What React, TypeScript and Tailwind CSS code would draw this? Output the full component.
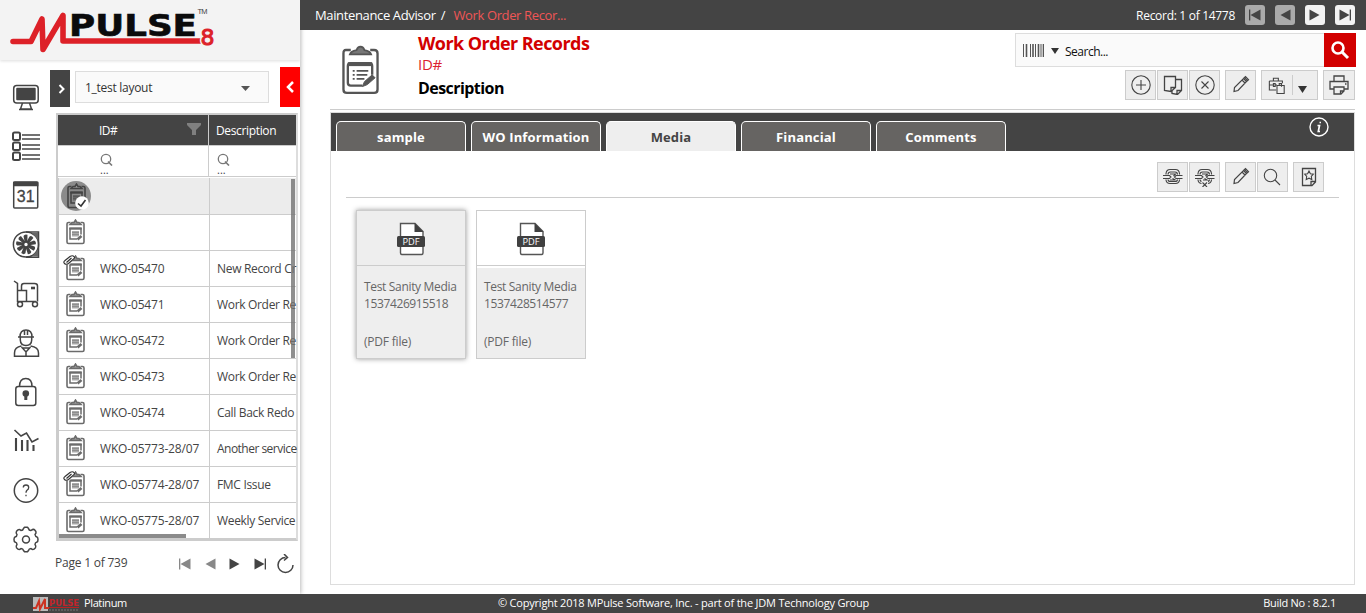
import React from "react";

type IconProps = { className?: string };

const Clipboard = ({ className = "w-[37px] h-[50px]" }: IconProps) => (
  <svg viewBox="0 0 38 50" className={className} fill="none" stroke="#555" strokeWidth="2.4">
    <path d="M9 4.500H4Q1.500 4.500 1.500 8V45Q1.500 48.500 5 48.500H33Q36.500 48.500 36.500 45V8Q36.500 4.500 33 4.500H29" />
    <path d="M8 9Q9 5.500 15 4.500Q16 1 19 1T23 4.500Q29 5.500 30 9Z" fill="#777" strokeWidth="1.800" />
    <path d="M31 30V21Q31 18 28 18H9Q6 18 6 21V38Q6 41 9 41H21" />
    <path d="M6 19H31" strokeWidth="4" />
    <path d="M11 26H13M15 26H27M11 30H13M15 30H26M11 34H13M15 34H23" strokeWidth="1.800" />
    <path d="M21 42L23 37L31 30L34 33L26 40Z" fill="#555" strokeWidth="1" />
  </svg>
);

const RowClipboard = ({ dark }: { dark?: boolean }) => (
  <svg viewBox="0 0 19 26" className="h-[26px] w-[19px]" fill="none" stroke={dark ? "#444" : "#6b6b6b"}>
    <path d="M4.500 3.500H2.500Q1 3.500 1 5V23Q1 24.500 2.500 24.500H16.500Q18 24.500 18 23V5Q18 3.500 16.500 3.500H14.500" strokeWidth="1.600" />
    <path d="M4 5.500L6 3.500H8L9.500 1L11 3.500H13L15 5.500Z" fill="#999" strokeWidth="1.500" />
    <path d="M15 15.500V9.500H4V20H11" strokeWidth="1.500" />
    <path d="M3.300 9.500H15.700" strokeWidth="2.200" />
    <rect x="6" y="12" width="7" height="5.500" fill={dark ? "#666" : "#aaa"} stroke="none" />
    <path d="M6 13.500H13M6 15.500H13" stroke={dark ? "#555" : "#888"} strokeWidth="0.800" />
    <path d="M11.500 20.500L15.500 17" strokeWidth="2.600" />
  </svg>
);

const Clip = () => (
  <svg viewBox="0 0 12 10" className="absolute left-[4px] top-[4px] h-[10px] w-[12px]" fill="none" stroke="#333" strokeWidth="1.200">
    <path d="M1 9.500L0 10V4L6 0H12V3L6 10Z" fill="#fff" stroke="none" />
    <path d="M3.500 7.500L8.500 3M2 5.500L7 1.500Q9.500 0 11 1.500T10 4.500L5.500 8.500Q3 10 1.500 8.500T2 5.500" />
  </svg>
);

const navIcons: React.ReactNode[] = [
  <>
    <rect x="1.700" y="2.500" width="24.500" height="17.500" rx="3" />
    <rect x="4.200" y="4.800" width="19.500" height="12.500" rx="1" fill="#444" stroke="none" />
    <path d="M10.500 20L8.500 26H19.500L17.500 20M7 26.500H21" />
  </>,
  <>
    <path d="M10 3H28M10 7H28M10 13H28M10 17H28M10 23H28M10 27H28" />
    <rect x="1" y="0.500" width="7" height="7.500" rx="1.500" strokeWidth="2" />
    <rect x="1" y="10.500" width="7" height="7.500" rx="1.500" strokeWidth="2" />
    <rect x="1" y="20.500" width="7" height="7.500" rx="1.500" strokeWidth="2" />
  </>,
  <>
    <rect x="1.700" y="1" width="24" height="26" rx="1" />
    <path d="M1 3H26.400" strokeWidth="4.500" />
    <text x="13.700" y="20.800" textAnchor="middle" fontSize="16" fontFamily="Liberation Sans, sans-serif" fill="#444" stroke="#444" strokeWidth="0.300">31</text>
  </>,
  <>
    <circle cx="14" cy="13.500" r="12.600" />
    <path d="M14 1H26.500V26.300H14" />
    <path d="M20 2L26 9V2ZM26 18.500L20 25.500H26Z" fill="#666" stroke="none" />
    {[0, 40, 80, 120, 160, 200, 240, 280, 320].map((a) => (
      <path key={a} transform={`rotate(${a} 14 13.5)`} d="M12.700 11L11.500 5Q12.500 2.800 15.500 3.800L15.300 11Z" fill="#444" stroke="none" />
    ))}
    <circle cx="14" cy="13.500" r="2.700" fill="#fff" strokeWidth="2" />
  </>,
  <>
    <path d="M2 1L5.500 3.500V21.500H24M5.500 11V22" />
    <path d="M9.500 10V6Q9.500 3.500 12 3.500H22.500Q25.500 3.500 25.500 6V21.500M5.500 10.500H14.500V21.500" />
    <path d="M19 8H23" strokeWidth="2.600" />
    <circle cx="8" cy="24.200" r="2.500" fill="#fff" /><circle cx="23" cy="24.200" r="2.500" fill="#fff" />
  </>,
  <>
    <path d="M6 8H22M8 8Q8 1 14 1T20 8M12.500 1V6M15.500 1V6" />
    <path d="M8.300 8V11Q8.500 16.500 14 16.500T19.700 11V8" />
    <path d="M9.500 17Q2.500 18 2.500 24V27.300H26.500V24Q26.500 18 18.500 17M9.500 18L14 23L18.500 18M14 23V27M11 19H17" />
  </>,
  <>
    <rect x="3.800" y="8.500" width="20" height="19" rx="2.500" />
    <path d="M7.500 8.500Q7.500 0.500 13.800 0.500T20 8.500" />
    <circle cx="13.800" cy="15.500" r="3.300" fill="#444" stroke="none" />
    <path d="M13.800 15.500V22" strokeWidth="3" />
  </>,
  <>
    <path d="M2.500 3L9 9L14.500 6L20 15L26.500 11.500" strokeWidth="1.600" />
    <path d="M4 11V24M10 13V24M15.500 13V24M21.500 18V24" strokeWidth="2.100" />
  </>,
  <>
    <circle cx="14" cy="13.500" r="11.700" />
    <path d="M11.300 10.500Q11.300 8 14 8T16.700 10.500Q16.700 12.300 15 13.300Q14 14.300 14 15.800M14 17.800V19.300" strokeWidth="1.300" />
  </>,
  <>
    <path transform="translate(0 -0.5)" d="M11.500 3L12.500 1.800H15.500L16.500 3Q17 5.200 19 5Q21.500 3 22.700 4.500L23.900 6Q24.500 7.500 23 9Q23.300 11 25 11.500Q26 12 26 14T25 16.500Q23 17 23 19Q24.500 21 23.500 22.300L22 23.600Q20.500 24.500 19 23Q17 23 16.500 25L15.500 26.200H12.500L11.500 25Q11 23 9 23Q7.500 24.500 6 23.600L4.500 22.300Q3.500 21 5 19Q5 17 3 16.500Q2 16 2 14T3 11.500Q5 11 5 9Q3.500 7.500 4.500 5.800L6 4.400Q7.500 3.500 9 5Q11 5 11.500 3Z" strokeLinejoin="round" />
    <circle cx="14" cy="13.500" r="3.500" />
  </>,
];

const rows: { id: string; desc: string; clip?: boolean; sel?: boolean }[] = [
  { id: "", desc: "", sel: true },
  { id: "", desc: "" },
  { id: "WKO-05470", desc: "New Record Cr", clip: true },
  { id: "WKO-05471", desc: "Work Order Re" },
  { id: "WKO-05472", desc: "Work Order Re" },
  { id: "WKO-05473", desc: "Work Order Re" },
  { id: "WKO-05474", desc: "Call Back Redo" },
  { id: "WKO-05773-28/07", desc: "Another service" },
  { id: "WKO-05774-28/07", desc: "FMC Issue", clip: true },
  { id: "WKO-05775-28/07", desc: "Weekly Service" },
];

const Btn = ({ children, className = "w-[31px]" }: { children: React.ReactNode; className?: string }) => (
  <button className={`flex h-[30px] shrink-0 items-center justify-center border border-[#ccc] bg-[#eee] pb-px ${className}`}>{children}</button>
);

const Ic = ({ children, className = "size-[20px]" }: { children: React.ReactNode; className?: string }) => (
  <svg viewBox="0 0 20 20" className={className} fill="none" stroke="#444" strokeWidth="1.1">{children}</svg>
);

const Pencil = () => (
  <Ic><path d="M3 16.500L3.500 12.500L12.500 3.500L15.500 6.500L7 15.500ZM12.500 3.500L14.500 1.700L17.500 4.700L15.500 6.500M11 5L14 8M13.500 2.600L16.500 5.600" strokeWidth="1.200" /></Ic>
);

const chain = (
  <>
    <path d="M3 7.500V6.500Q3.500 2.500 7 2.500H12.500Q16 2.500 16.500 6.500V7.500M5 7.500Q5 5 7.500 5H12Q14.500 5 14.500 7.500" />
    <path d="M3 12.500V13Q3.500 16.500 7 16.500H12.500Q16 16.500 16.500 13V12.500M5 12.500Q5 14.500 7.500 14.500H12Q14.500 14.500 14.500 12.500" />
    <path d="M0 8.500H6.500L8 10L6.500 11.500H0M19.500 8.500H13L11.500 10L13 11.500H19.500" />
  </>
);

const Step = ({ dir, bar, color = "#444" }: { dir: "l" | "r"; bar?: boolean; color?: string }) => (
  <svg viewBox="0 0 14 14" className="size-[14px]" fill={color}>
    <g transform={dir === "r" ? "translate(14 0) scale(-1 1)" : undefined}>
      <path d="M12.500 1.500V12.500L2.500 7Z" />
      {bar && <path d="M1 1.500H2.300V12.500H1Z" />}
    </g>
  </svg>
);

const Funnel = () => (
  <svg viewBox="0 0 14 12" className="mb-[2px] h-[12px] w-[14px]" fill="#808080"><path d="M0 0H14V2L9 7V12H5V7L0 2Z" /></svg>
);

const Lens = () => (
  <svg viewBox="0 0 13 13" className="size-[13px]" fill="none" stroke="#777" strokeWidth="1.300"><circle cx="6" cy="6" r="4.700" /><path d="M8 8.500L12 12.500" strokeWidth="1.600" /></svg>
);

const Logo = () => (
  <svg viewBox="0 0 300 60" className="h-[60px] w-[300px]">
    <text x="69" y="35.500" fontSize="29.500" fontWeight="700" fontFamily="DejaVu Sans, sans-serif" textLength="128" lengthAdjust="spacingAndGlyphs" fill="#0b0b0c" stroke="#0b0b0c" strokeWidth="0.600">PULSE</text>
    <path d="M13 41.500H31L42 19L43 49.500L63 15.500V41H203" fill="none" stroke="#dd2128" strokeWidth="5.600" strokeLinejoin="round" strokeLinecap="round" />
    <text x="197.500" y="13.500" fontSize="7.500" fontFamily="Liberation Sans, sans-serif" fill="#444" textLength="10">TM</text>
    <text x="200.500" y="44.500" fontSize="22" fontFamily="DejaVu Sans, sans-serif" fill="none" stroke="#f3f3f3" strokeWidth="4" textLength="14" lengthAdjust="spacingAndGlyphs">8</text>
    <text x="200.500" y="44.500" fontSize="22" fontFamily="DejaVu Sans, sans-serif" fill="#dd2128" stroke="#dd2128" strokeWidth="1" textLength="14" lengthAdjust="spacingAndGlyphs">8</text>
  </svg>
);

const PdfIcon = () => (
  <svg viewBox="0 0 30 34" className="h-[34px] w-[30px]">
    <path d="M4.500 1.500H19L27 9.500V31Q27 32.500 25.500 32.500H6Q4.500 32.500 4.500 31Z" fill="#fff" stroke="#555" strokeWidth="1.400" />
    <path d="M18.500 1V10H27.500Z" fill="#404040" />
    <rect x="1" y="14" width="28" height="11" rx="1.500" fill="#404040" />
    <text x="15" y="22.800" textAnchor="middle" fontSize="9.300" fontFamily="Open Sans, sans-serif" fill="#fff">PDF</text>
  </svg>
);

const Card = ({ num, active }: { num: string; active?: boolean }) => (
  <div className={`flex h-[149px] w-[110px] flex-col border border-[#ccc] text-[12px] leading-[17px] text-[#666] ${active ? "bg-[#eee] shadow-[0_0_5px_#999]" : "bg-white"}`}>
    <div className="flex h-[55px] shrink-0 items-center justify-center border-b border-[#ccc] pt-[2px] pr-[1px]"><PdfIcon /></div>
    <div className="mt-[2px] flex-1 bg-[#eee] pt-[10px] pl-[7px]">
      <div className="whitespace-nowrap tracking-[-0.330px]">Test Sanity Media</div>
      <div className="tracking-[-0.380px]">{num}</div>
      <div className="mt-[21px] tracking-[-0.200px]">(PDF file)</div>
    </div>
  </div>
);

const tabs = ["sample", "WO Information", "Media", "Financial", "Comments"];

export default function App() {
  return (
    <div className="flex h-[613px] w-[1366px] flex-col overflow-hidden bg-white font-['Open_Sans','Noto_Sans',sans-serif] text-[12px] text-[#444]">
      <div className="flex h-[594px]">
        <aside className="flex w-[300px] shrink-0 flex-col shadow-[1px_0_4px_#bbb]">
          <div className="h-[60px] shrink-0 bg-[#f3f3f3] shadow-[0_1px_3px_#ddd]"><Logo /></div>
          <div className="flex flex-1">
            <nav className="flex w-[50px] flex-col gap-[21.200px] pt-[23px] pl-[12px]">
              {navIcons.map((icon, i) => (
                <svg key={i} viewBox="0 0 28 28" className="size-[28px] shrink-0 overflow-visible" fill="none" stroke="#444" strokeWidth="1.500">{icon}</svg>
              ))}
            </nav>
            <div className="flex w-[250px] flex-col">
              <div className="flex h-[53px] pt-[7px]">
                <button className="mt-[3px] flex h-[37px] w-[20px] items-center justify-center bg-[#444]">
                  <svg viewBox="0 0 8 10" className="ml-[4px] h-[10px] w-[8px]" fill="none" stroke="#fff" strokeWidth="2"><path d="M1.500 1L5.500 5L1.500 9" /></svg>
                </button>
                <div className="mt-[4px] ml-[5px] flex h-[32px] w-[194px] items-center justify-between border border-[#ddd] bg-[#fafafa] pr-[18px] pl-[9px] text-[#333]">
                  <span className="pt-[2px] tracking-[-0.280px]">1_test layout</span>
                  <svg viewBox="0 0 9 5" className="mt-[2px] h-[5px] w-[9px]" fill="#555"><path d="M0 0H9L4.500 5Z" /></svg>
                </div>
                <button className="ml-[11px] flex h-[40px] w-[20px] items-center justify-center bg-[#f00]">
                  <svg viewBox="0 0 8 12" className="h-[12px] w-[8px]" fill="none" stroke="#fff" strokeWidth="2.500"><path d="M7 1L2 6L7 11" /></svg>
                </button>
              </div>
              <div className="ml-[6px] flex h-[428px] w-[242px] shrink-0 flex-col border-2 border-[#ccc] border-r-[#ddd]">
                <div className="flex h-[31px] shrink-0 border-b border-[#ccc] bg-[#444] text-white">
                  <div className="flex w-[151px] items-center justify-between border-r border-[#ccc] pr-[7px] pl-[41px]"><span className="pt-[2px] tracking-[-0.500px]">ID#</span><Funnel /></div>
                  <div className="flex items-center pt-[2px] pl-[7px] tracking-[-0.350px]">Description</div>
                </div>
                <div className="flex h-[31px] shrink-0 border-b border-[#ccc] text-[11px]">
                  <div className="flex w-[151px] flex-col border-r border-[#ccc] pt-[7px] pl-[42px]"><Lens /><span className="-mt-[2px] leading-[12px]">...</span></div>
                  <div className="flex flex-col pt-[7px] pl-[8px]"><Lens /><span className="-mt-[2px] leading-[12px]">...</span></div>
                </div>
                <div className="relative mt-px h-[361px] border-l border-[#ccc]">
                  {rows.map((r, i) => (
                    <div key={i} className={`flex border-b border-[#ccc] ${i === 0 ? "h-[37px]" : "h-[36px]"} ${r.sel ? "bg-[#ececec]" : ""}`}>
                      <div className="relative flex w-[41px] shrink-0 items-start pt-[4px] pl-[7px]">
                        {r.sel ? (
                          <div className="-mt-[1px] -ml-[5px] flex size-[30px] items-center justify-center rounded-full bg-[#8b8b8b]">
                            <RowClipboard dark />
                            <svg viewBox="0 0 14 14" className="absolute top-[18px] left-[16px] size-[14px]"><circle cx="7" cy="7" r="6.800" fill="#fff" /><path d="M3 7.500L6 10L10.500 4" fill="none" stroke="#333" strokeWidth="1.600" /></svg>
                          </div>
                        ) : <RowClipboard />}
                        {r.clip && <Clip />}
                      </div>
                      <div className="flex w-[110px] shrink-0 items-center border-r border-[#ccc] tracking-[-0.170px] whitespace-nowrap">{r.id}</div>
                      <div className={`flex w-[86px] shrink-0 items-center pl-[7px] whitespace-nowrap ${r.desc === "Another service" ? "tracking-[-0.520px]" : "tracking-[-0.320px]"}`}>{r.desc}</div>
                    </div>
                  ))}
                  <div className="absolute top-[1px] right-[1px] h-[179px] w-[4px] bg-[#737373]/80" />
                  <div className="absolute bottom-px left-0 h-[4px] w-[127px] bg-[#8b8b8b]" />
                </div>
              </div>
              <div className="flex h-[46px] items-center pl-[5px]">
                <span className="w-[123px] pb-[3px] tracking-[-0.220px]">Page 1 of 739</span>
                <div className="flex gap-[11px]">
                  <Step dir="l" bar color="#888" /><Step dir="l" color="#888" /><Step dir="r" /><Step dir="r" bar />
                </div>
                <svg viewBox="0 0 20 20" className="ml-[8px] size-[20px] shrink-0" fill="none" stroke="#444" strokeWidth="1.500"><path d="M10.500 3.500A7.500 7.500 0 1 0 18 11M9 0L12.500 3.500L9 6.500" /></svg>
              </div>
            </div>
          </div>
        </aside>

        <main className="flex w-[1066px] flex-col">
          <header className="flex h-[30px] shrink-0 items-center bg-[#444] pr-[11px] pl-[15px] text-[13px] text-white">
            <span className="pt-px tracking-[-0.360px]">Maintenance Advisor</span>
            <span className="ml-[5px] pt-px">/</span>
            <span className="ml-[8px] pt-px tracking-[-0.370px] text-[#ef5656]">Work Order Recor...</span>
            <span className="ml-auto pt-px text-[12px] tracking-[-0.300px]">Record: 1 of 14778</span>
            <div className="ml-[10px] flex gap-[10px]">
              {([["l", true], ["l", false], ["r", false], ["r", true]] as ["l" | "r", boolean][]).map(([d, b], i) => (
                <button key={i} className={`flex size-[20px] items-center justify-center rounded-[3px] ${i < 2 ? "bg-[#aaa]" : "bg-[#f2f2f2]"}`}><Step dir={d} bar={b} /></button>
              ))}
            </div>
          </header>
          <section className="ml-[30px] flex h-[80px] w-[1025px] shrink-0 border-b border-[#ccc]">
            <div className="pt-[15px] pl-[12px]"><Clipboard /></div>
            <div className="ml-[39px] flex flex-col whitespace-nowrap">
              <h1 className="mt-[1px] text-[18px] leading-[24px] font-bold tracking-[-0.560px] text-[#d20000]">Work Order Records</h1>
              <div className="text-[15px] leading-[18px] tracking-[-0.300px] text-[#dc2030]">ID#</div>
              <div className="mt-[4px] text-[16px] leading-[22px] font-bold tracking-[-0.560px] text-black">Description</div>
            </div>
            <div className="ml-auto flex flex-col items-end">
              <div className="mt-[3px] mr-[-1px] flex h-[34px] w-[341px] border border-r-0 border-[#ddd] bg-[#fafafa]">
                <svg viewBox="0 0 21 13" className="mt-[10px] ml-[7px] h-[13px] w-[21px]" stroke="#555"><path d="M.5 0V13M7.500 0V13M12.500 0V13M18 0V13" strokeWidth="1" /><path d="M3.500 0V13M10 0V13M15.500 0V13M20.500 0V13" strokeWidth="1.600" /></svg>
                <svg viewBox="0 0 8 6" className="mt-[14px] ml-[7px] h-[6px] w-[8px]" fill="#333"><path d="M0 0H8L4 6Z" /></svg>
                <span className="mt-[9px] ml-[6px] leading-[18px] tracking-[-0.500px] text-[#111]">Search...</span>
                <button className="-my-px ml-auto flex w-[32px] items-center justify-center bg-[#d20000]">
                  <svg viewBox="0 0 20 20" className="size-[20px]" fill="none" stroke="#fff" strokeWidth="2.600"><circle cx="8" cy="8" r="5.500" /><path d="M12 12L18 18" strokeWidth="3" /></svg>
                </button>
              </div>
              <div className="mt-[3px] flex">
                <Btn><Ic><circle cx="10" cy="10" r="9.200" /><path d="M10 5V15M5 10H15" /></Ic></Btn>
                <Btn className="ml-px w-[31px]"><Ic><path d="M1.500 1.500H12.500V12.500L8 16.500L1.500 15.500ZM8 16.500V12.500H12.500M12.500 4.500H18.500V15.500L14.500 19.500L9 18.500V16M14 19.500V15.500H18.500" strokeWidth="1.300" /></Ic></Btn>
                <Btn className="ml-px w-[31px]"><Ic><circle cx="10" cy="10" r="9.200" /><path d="M6.500 6.500L13.500 13.500M13.500 6.500L6.500 13.500" /></Ic></Btn>
                <Btn className="ml-[5px] w-[31px]"><Pencil /></Btn>
                <Btn className="ml-[5px] w-[57px] pr-[4px]">
                  <Ic className="size-[18px]"><path d="M6 5.500V2.500H11.500V5.500M1.500 5.500H16V8M9 15.500H1.500V5.500M1.500 10H6M8 10H10M6 8.500H8V11.500H6ZM10 10.500H18V19.500H10ZM12.500 10.500V8.500H15V12" strokeWidth="1.200" /></Ic>
                  <span className="mr-[5px] ml-[6px] h-[20px] w-px bg-[#ccc]" />
                  <svg viewBox="0 0 9 7" className="mt-[9px] h-[7px] w-[9px]" fill="#333"><path d="M0 0H9L4.500 7Z" /></svg>
                </Btn>
                <Btn className="ml-[5px] w-[32px]"><Ic><path d="M5 6.500V1H15V6.500M4.500 14H1V6.500H19V14H15.500M5 12H15V16L12 19H5ZM11.500 19V16H15M16 9H17.500" strokeWidth="1.300" /></Ic></Btn>
              </div>
            </div>
          </section>
          <section className="mt-[2px] ml-[30px] h-[473px] w-[1025px] border border-[#ddd]">
            <div className="flex h-[38px] items-end bg-[#444] pl-[5px]">
              {tabs.map((t) => (
                <button key={t} className={`mr-[5px] h-[30px] w-[130px] rounded-t-[5px] border border-b-0 border-white pt-[2px] text-[13px] font-bold tracking-[0.150px] ${t === "Media" ? "bg-[#eee] text-[#444]" : "bg-[#666462] text-white"}`}>{t}</button>
              ))}
              <svg viewBox="0 0 20 20" className="mr-[25px] mb-[14px] ml-auto size-[20px]" fill="none" stroke="#fff"><circle cx="10" cy="10" r="9" strokeWidth="1.400" /><path d="M10.500 5.500H12M8.500 8.500H10.500L9.300 14.500H11" strokeWidth="1.700" /></svg>
            </div>
            <div className="ml-[15px] flex h-[47px] w-[993px] justify-end border-b border-[#ccc] pt-[11px] pr-[15px]">
              <Btn><Ic>{chain}<path d="M7 7H12.500L10.500 9M7 13H12.500L9.500 11.500" /></Ic></Btn>
              <Btn className="ml-px w-[31px]"><Ic>{chain}<path d="M6.500 13.200H13V20H6.500Z" fill="#eee" stroke="none" /><path d="M7 7H12.500L10.500 9M8 13H12L9.500 11.500M7.500 15.500L12 20M12 15.500L7.500 20" /></Ic></Btn>
              <Btn className="ml-[5px] w-[31px]"><Pencil /></Btn>
              <Btn className="ml-px w-[31px] pr-px"><Ic><circle cx="8.500" cy="8.500" r="6.200" /><path d="M13 13L18 18" /></Ic></Btn>
              <Btn className="ml-[5px] w-[31px]"><Ic><path d="M3.500 1.500H16.500V15L13 18.500H3.500ZM12 18V14.500H16" strokeWidth="1.300" /><path d="M10 4L11.400 6.700L14.300 7.200L12.300 9.500L12.800 12.500L10 11.200L7.200 12.500L7.700 9.500L5.700 7.200L8.600 6.700Z" /></Ic></Btn>
            </div>
            <div className="flex gap-[10px] pt-[12px] pl-[25px]">
              <Card num="1537426915518" active />
              <Card num="1537428514577" />
            </div>
          </section>
        </main>
      </div>
      <footer className="flex h-[19px] items-center bg-[#444] text-[11px] text-white">
        <div className="flex w-[498px] items-center pl-[32px]">
          <svg viewBox="0 0 50 16" className="h-[16px] w-[50px]">
            <rect x="1" y="1" width="15" height="14" fill="#bbb" />
            <path d="M1 12H4L7 5L8 13L13 3V12H17" fill="none" stroke="#c32" strokeWidth="2" />
            <text x="17" y="9.500" fontSize="8" fontWeight="700" fontFamily="DejaVu Sans, sans-serif" textLength="30" lengthAdjust="spacingAndGlyphs" fill="#c4242b">PULSE</text>
            <path d="M17 11.500H47" stroke="#b22" /><path d="M17 14H46" stroke="#777" strokeDasharray="2 1" />
          </svg>
          <span className="ml-[2px] tracking-[-0.380px]">Platinum</span>
        </div>
        <span className="tracking-[-0.205px]">© Copyright 2018 MPulse Software, Inc. - part of the JDM Technology Group</span>
        <span className="mr-[30px] ml-auto tracking-[-0.270px]">Build No : 8.2.1</span>
      </footer>
    </div>
  );
}
